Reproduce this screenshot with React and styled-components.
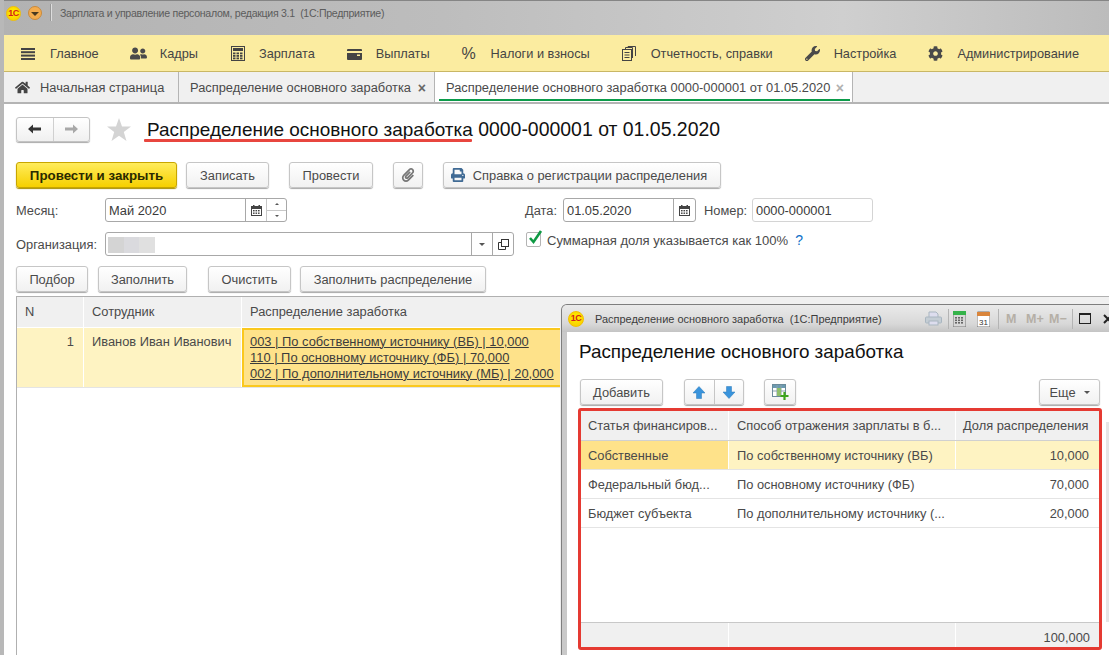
import React from 'react';
import styled, { createGlobalStyle } from 'styled-components';
import { FaWrench, FaCog, FaHome, FaPrint, FaUserFriends, FaPaperclip } from 'react-icons/fa';

const Global = createGlobalStyle`
  html, body { margin: 0; padding: 0; height: 655px; overflow: hidden; background: #fff; }
  #root { height: 655px; }
  * { box-sizing: border-box; }
  body { font-family: "Liberation Sans", Arial, sans-serif; font-size: 12.85px; color: #4a4a4a; }
`;

const Screen = styled.div`
  position: relative; width: 1109px; height: 655px; overflow: hidden;
  display: flex; flex-direction: column;
  background: #fff; border-left: 4px solid #b8b8b8;
`;
const TitleBar = styled.div`
  height: 35px; margin-left: -4px; display: flex; align-items: center; padding: 0 0 10px 6px;
  border-top: 1px solid #858585;
  background: linear-gradient(90deg, #b2b2b2 0, #bdbdbd 40%, #cfcfcf 76%, #bcbcbc 100%);
`;
const Logo = styled.span`
  width: ${p => p.$s || 15}px; height: ${p => p.$s || 15}px; border-radius: 50%; flex: none;
  background: radial-gradient(circle at 50% 40%, #fff200, #f7c600);
  border: 1px solid #f3c000;
  display: flex; align-items: center; justify-content: center;
  color: #d6201a; font: bold 9px/1 "Liberation Sans", sans-serif; letter-spacing: -0.6px;
`;
const RoundBtn = styled.span`
  width: 14px; height: 14px; margin-left: 7px; border-radius: 50%; flex: none;
  background: #f4ac4e; border: 1px solid #c98a3c;
  display: flex; align-items: center; justify-content: center;
  &::after { content: ""; border: 4px solid transparent; border-top: 4px solid #4a3a20; border-bottom: 0; margin-top: 2px; }
`;
const TitleSep = styled.span`
  width: 1px; height: 17px; margin: -2px 9px 0 8px; background: #999; box-shadow: 1px 0 0 #ddd;
`;
const TitleText = styled.span`
  font-size: 10.6px; letter-spacing: -0.3px; color: #5c5c5c; white-space: pre;
`;
const Menu = styled.div`
  height: 37px; display: flex; align-items: center; gap: 31px; padding: 1px 0 0 16px;
  background: #fbeca0; border-bottom: 1px solid #c9b765;
`;
const MenuItem = styled.div`
  display: flex; align-items: center; font-size: 12.75px; color: #444; white-space: nowrap;
`;
const MenuIcon = styled.span`
  width: 30px; flex: none; display: flex; align-items: center; color: #4a4a4a; font-size: 15px;
  padding-left: ${p => p.$pl || 0}px;
`;
const Percent = styled.span`
  font-size: 16px; color: #444;
`;
const Tabs = styled.div`
  height: 32px; display: flex; background: #f0f0f0; border-bottom: 2px solid #b4b4b4;
`;
const Tab = styled.div`
  position: relative; width: ${p => p.$w}px; flex: none; display: flex; align-items: center;
  padding: 1px 0 0 ${p => p.$pl || 11}px; color: #4a4a4a; white-space: nowrap;
  border-right: 1px solid #b4b4b4;
  background: ${p => (p.$active ? '#fff' : 'transparent')};
  ${p => p.$active && `&::after { content: ""; position: absolute; left: 4px; right: 2px; bottom: 1px; height: 2px; background: #0b9b4a; }`}
`;
const HomeIcon = styled.span`
  display: flex; width: 25px; font-size: 15px; color: #444; flex: none;
`;
const TabClose = styled.span`
  margin-left: auto; margin-right: 8px; font-size: 14px; font-weight: bold; line-height: 1;
  color: ${p => (p.$dim ? '#b0b0b0' : '#666')};
`;

const Sheet = styled.div`
  flex: 1; min-height: 0; display: flex; flex-direction: column; padding-left: 12px; background: #fff;
`;
const DocHead = styled.div`
  height: 24px; margin-top: 13px; display: flex; align-items: center;
`;
const NavGroup = styled.div`
  width: 74px; height: 25px; display: flex; flex: none;
  border: 1px solid #c4c4c4; border-radius: 3px; box-shadow: 0 1px 1px #aaa;
  background: linear-gradient(#fff, #f0f0f0);
`;
const NavCell = styled.span`
  flex: 1; display: flex; align-items: center; justify-content: center;
  & + & { border-left: 1px solid #d0d0d0; }
`;
const StarWrap = styled.span`
  display: flex; margin: 0 16px 0 17px;
`;
const DocTitle = styled.h1`
  margin: 0; position: relative; font-size: 19.45px; font-weight: normal; color: #111; white-space: nowrap;
`;
const Underlined = styled.span`
  position: relative; font-size: 18.95px;
  &::after { content: ""; position: absolute; left: -3px; right: 1px; bottom: -2px; height: 2.5px; background: #e8463f; border-radius: 1px; }
`;
const BtnRow = styled.div`
  display: flex; align-items: flex-start; margin-top: ${p => p.$mt}px;
`;
const Btn = styled.button`
  height: 26px; width: ${p => p.$w}px; margin-left: ${p => p.$ml || 0}px; padding: 0 ${p => p.$pr || 0}px 0 0; flex: none;
  display: flex; align-items: center; justify-content: center; gap: 8px;
  border: 1px solid ${p => (p.$primary ? '#c8a600' : '#c6c6c6')}; border-radius: 3px;
  box-shadow: 0 1px 1px ${p => (p.$primary ? '#a89000' : '#a8a8a8')};
  background: ${p => (p.$primary ? 'linear-gradient(#ffec5c, #f6d000)' : 'linear-gradient(#fff, #f1f1f1)')};
  font: ${p => (p.$primary ? 'bold 13.3px' : 'normal 12.85px')} "Liberation Sans", sans-serif;
  color: ${p => (p.$primary ? '#2a2a00' : '#4a4a4a')};
`;
const FieldRow = styled.div`
  display: flex; align-items: flex-start; margin-top: 10px; height: 24px;
`;
const Label = styled.span`
  width: ${p => p.$w}px; flex: none; margin-left: ${p => p.$ml || 0}px; line-height: 26px; color: #4a4a4a; white-space: nowrap;
`;
const Field = styled.div`
  width: ${p => p.$w}px; height: 24px; flex: none; display: flex; background: #fff;
  border: 1px solid ${p => (p.$light ? '#d4d4d4' : '#a8a8a8')}; border-radius: 3px;
`;
const FieldText = styled.span`
  flex: 1; min-width: 0; padding-left: 3px; line-height: 24px; color: #3a3a3a; white-space: nowrap;
`;
const FieldBtn = styled.span`
  width: ${p => p.$w || 21}px; flex: none; display: flex; align-items: center; justify-content: center;
  border-left: 1px solid #a8a8a8; color: #444;
`;
const Spin = styled.span`
  width: 20px; flex: none; display: flex; flex-direction: column; border-left: 1px solid #c8c8c8;
`;
const SpinPart = styled.span`
  flex: 1; display: flex; align-items: center; justify-content: center;
  & + & { border-top: 1px solid #c8c8c8; }
  &::after {
    content: ""; border: 2px solid transparent;
    ${p => (p.$up ? 'border-bottom: 2px solid #555; border-top: 0;' : 'border-top: 2px solid #555; border-bottom: 0;')}
  }
`;
const Caret = styled.span`
  border: 3px solid transparent; border-top: 3.5px solid #555; border-bottom: 0;
`;
const Blur = styled.span`
  display: block; width: 47px; height: 16px; margin: 4px 0 0 -1px;
  background: linear-gradient(90deg, #d4d4d4 0 33%, #dadade 33% 66%, #e0e0e0 66%);
`;
const CheckWrap = styled.div`
  display: flex; margin-left: 12px; height: 15px; align-items: center;
`;
const CheckBox = styled.span`
  position: relative; width: 15px; height: 15px; flex: none; border: 1px solid #b4b4b4; border-radius: 2px; background: #fff;
`;
const CheckMark = styled.svg`
  position: absolute; left: 1px; top: -4px;
`;
const CheckLabel = styled.span`
  margin: 1px 0 0 6px; font-size: 13.05px; color: #4a4a4a; white-space: nowrap;
`;
const Help = styled.span`
  margin: 1px 0 0 7px; font-size: 14px; color: #0f70c8;
`;
const DataTable = styled.div`
  flex: 1; min-height: 0; margin-top: 4px; border-top: 1px solid #b0b0b0; border-left: 1px solid #b0b0b0;
  display: flex; flex-direction: column;
`;
const GridRow = styled.div`
  display: grid; grid-template-columns: ${p => p.$cols}; height: ${p => p.$h}px; flex: none;
  column-gap: 1px;
`;
const HeadCell = styled.div`
  background: #f0f0f0; padding: 0 0 0 ${p => p.$pl ?? 8}px; line-height: ${p => p.$h || 30}px;
  color: #4a4a4a; white-space: nowrap; overflow: hidden;
  ${p => p.$end && 'text-align: right; padding: 0 9px 0 0;'}
`;
const RowLine = styled.div`
  height: 1px; flex: none; background: ${p => p.$c || '#fff'};
`;
const Cell = styled.div`
  background: ${p => p.$bg || '#fff'}; padding: ${p => p.$pt ?? 6}px ${p => (p.$end ? p.$pr || 9 : 0)}px 0 ${p => p.$pl ?? 8}px; line-height: 16px;
  color: #4a4a4a; white-space: nowrap; overflow: hidden; text-align: ${p => (p.$end ? 'right' : 'left')};
`;
const LinkCell = styled.div`
  background: #fee28a; border: 2px solid #fac81e; padding: 4px 0 0 6px; font-size: 12.92px; line-height: 16px; color: #3c3c3c; white-space: nowrap; overflow: hidden;
`;
const LinkLine = styled.div`
  text-decoration: underline; text-decoration-thickness: 1px; text-underline-offset: 1px;
`;

const Popup = styled.div`
  position: absolute; left: 557px; top: 304px; width: 560px; height: 351px;
  border: 1px solid #7e7e7e; border-bottom: 0; border-radius: 6px 6px 0 0;
  background: #c9c9c9; display: flex; flex-direction: column;
  box-shadow: -1px 0 0 #eee;
`;
const PopTitle = styled.div`
  height: 27px; flex: none; display: flex; align-items: center; padding-left: 6px;
  background: linear-gradient(#eaeaea, #d8d8d8 70%, #c4c4c4);
  border-radius: 5px 5px 0 0;
`;
const PopTitleText = styled.span`
  margin-left: 11px; width: 330px; flex: none; font-size: 10.97px; color: #3c3c3c; white-space: pre;
`;
const ToolSlot = styled.span`
  display: flex; flex: none; margin-left: ${p => p.$ml || 0}px;
`;
const ToolSep = styled.span`
  width: 1px; height: 20px; flex: none; background: #b4b4b4; margin-left: ${p => p.$ml || 0}px;
`;
const MemKey = styled.span`
  width: ${p => p.$w}px; flex: none; margin-left: ${p => p.$ml || 0}px;
  font: bold 12.5px "Liberation Sans", sans-serif; color: #b5afa6; white-space: nowrap;
`;
const PopBody = styled.div`
  position: relative; flex: 1; min-height: 0; margin-left: 5px; background: #fff; padding-left: 11px; display: flex; flex-direction: column;
`;
const PopHeading = styled.h2`
  margin: 7px 0 0 1px; height: 26px; font-size: 18.87px; line-height: 26px; font-weight: normal; color: #111; white-space: nowrap;
`;
const PopBar = styled.div`
  display: flex; width: 520px; margin: 14px 0 0 2px; flex: none;
`;
const SplitBtn = styled.div`
  display: flex; width: 60px; height: 26px; margin-left: 21px; flex: none;
  border: 1px solid #c6c6c6; border-radius: 3px; box-shadow: 0 1px 1px #a8a8a8;
  background: linear-gradient(#fff, #f1f1f1);
`;
const SplitPart = styled.span`
  flex: 1; display: flex; align-items: center; justify-content: center;
  & + & { border-left: 1px solid #c6c6c6; }
`;
const Frame = styled.div`
  width: 524px; height: 242px; margin-top: 3px; flex: none; display: flex; flex-direction: column;
  border: 3px solid #e53a32; border-radius: 3px; background: #fff;
`;
const FrameSpacer = styled.div`
  flex: 1; min-height: 0;
`;
const ScrollHint = styled.span`
  position: absolute; left: 539px; top: 90px; width: 3px; height: 200px; background: #e6e6e6;
`;

const Burger = () => (
  <svg width="14" height="14" viewBox="0 0 14 14" fill="#444"><rect y="1" width="14" height="2" /><rect y="4.2" width="14" height="2" /><rect y="7.6" width="14" height="2" /><rect y="11" width="14" height="2" /></svg>
);
const Calc = () => (
  <svg width="14" height="15" viewBox="0 0 14 15"><rect x=".5" y=".5" width="13" height="14" fill="none" stroke="#444" /><rect x="2" y="2" width="10" height="3" fill="#444" />{[6.5, 9, 11.5].map(y => [2, 5.5, 9].map(x => <rect key={x + '-' + y} x={x} y={y} width="2.5" height="1.8" fill="#444" />))}</svg>
);
const Wallet = () => (
  <svg width="15" height="12" viewBox="0 0 15 12"><path d="M1 1h13a1 1 0 0 1 1 1v1H0V2a1 1 0 0 1 1-1z" fill="#444" /><path d="M0 5h15v6a1 1 0 0 1-1 1H1a1 1 0 0 1-1-1z" fill="#444" /><rect x="10" y="6.5" width="3" height="1.5" fill="#fbeca0" /></svg>
);
const Report = () => (
  <svg width="14" height="15" viewBox="0 0 14 15" fill="none" stroke="#444"><rect x=".5" y="3.5" width="9" height="11" fill="#fbeca0" /><path d="M3.5 3V1.5h7V12M6 1V.5h7.5V10M2.5 6.5h5M2.5 9h5M2.5 11.5h5" /></svg>
);
const Star = () => (
  <svg width="24" height="23" viewBox="0 0 24 23"><path d="M12 0l3 8.6h9l-7.2 5.5 2.7 8.9L12 17.7 4.5 23l2.7-8.9L0 8.6h9z" fill="#d4d4d4" /></svg>
);
const ArrowL = ({ c = '#333' }) => (
  <svg width="13" height="10" viewBox="0 0 13 10" fill={c}><path d="M0 5l5-4.5V3.5h8v3H5v3z" /></svg>
);
const ArrowR = ({ c = '#a8a8a8' }) => (
  <svg width="13" height="10" viewBox="0 0 13 10" fill={c}><path d="M13 5L8 .5V3.5H0v3h8v3z" /></svg>
);
const BlueUp = ({ down }) => (
  <svg width="12" height="13" viewBox="0 0 12 13" style={down ? { transform: 'scaleY(-1)' } : undefined}><path d="M6 .5L12 7H8.5v5.5h-5V7H0z" fill="#3a94dc" stroke="#2b78b8" strokeWidth=".5" /></svg>
);
const TableAdd = () => (
  <svg width="17" height="17" viewBox="0 0 17 17"><rect x=".5" y=".5" width="13" height="12" fill="#fff" stroke="#6a8a9a" /><rect x="1" y="1" width="12" height="3" fill="#6a9ab0" /><path d="M5 1v11M9 1v11M1 7h12" stroke="#8aa0ac" /><rect x="5" y="4" width="4" height="8" fill="#8fbf6a" /><path d="M12.5 8v8M8.5 12h8" stroke="#3fa51e" strokeWidth="2.2" /></svg>
);
const CalIcon = () => (
  <svg width="11" height="11" viewBox="0 0 11 11" fill="#444"><path d="M0 1h11v10H0z" /><rect x="1" y="4" width="9" height="6" fill="#fff" /><rect x="2" y="0" width="1.5" height="2" /><rect x="7.5" y="0" width="1.5" height="2" />{[2, 4.5, 7].map(x => [5, 7.5].map(y => <rect key={x + '-' + y} x={x} y={y} width="1.6" height="1.4" />))}</svg>
);
const Copy = () => (
  <svg width="11" height="11" viewBox="0 0 11 11" fill="none" stroke="#333"><rect x="3.5" y=".5" width="7" height="7" /><path d="M3 3.5H.5v7h7V8" /></svg>
);
const PrintDim = () => (
  <svg width="17" height="15" viewBox="0 0 17 15" fill="none" stroke="#a9b6c0"><path d="M4 6V1h7l2 2v3" fill="#dde" /><rect x=".5" y="6" width="16" height="6" rx="1" fill="#c4cdd4" /><rect x="4" y="10" width="9" height="4" fill="#dde" /></svg>
);
const CalcGreen = () => (
  <svg width="13" height="16" viewBox="0 0 13 16"><rect width="13" height="16" fill="#d8d8d8" stroke="#777" /><rect width="13" height="4" fill="#35b34a" />{[6, 8.5, 11].map(y => [2, 5, 8].map(x => <rect key={x + '-' + y} x={x} y={y} width="2" height="1.6" fill="#666" />))}</svg>
);
const Cal31 = () => (
  <svg width="13" height="16" viewBox="0 0 13 16"><rect y="1" width="13" height="15" rx="1" fill="#fff" stroke="#777" /><rect y="1" width="13" height="4" fill="#d9853b" /><text x="6.5" y="13.5" textAnchor="middle" fontSize="8" fontFamily="Liberation Sans" fill="#333">31</text></svg>
);
const Maximize = () => (
  <svg width="12" height="11" viewBox="0 0 12 11" fill="none" stroke="#222"><rect x=".5" y=".5" width="11" height="10" /><path d="M0 1.5h12" /></svg>
);
const CloseX = () => (
  <svg width="10" height="10" viewBox="0 0 10 10" stroke="#222" strokeWidth="2"><path d="M1 1l8 8M9 1l-8 8" /></svg>
);

const menu = [
  ['Главное', <Burger />, 1],
  ['Кадры', <FaUserFriends size={17} />, 0],
  ['Зарплата', <Calc />, 2],
  ['Выплаты', <Wallet />, 1],
  ['Налоги и взносы', <Percent>%</Percent>, 1],
  ['Отчетность, справки', <Report />, 1],
  ['Настройка', <FaWrench size={15} />, 1],
  ['Администрирование', <FaCog size={15} />, 1],
];

const mainCols = '66px 157px 1fr';
const popCols = '147px 226px 1fr';

export default function App() {
  return (
    <Screen>
      <Global />
      <TitleBar>
        <Logo>1С</Logo>
        <RoundBtn />
        <TitleSep />
        <TitleText>Зарплата и управление персоналом, редакция 3.1  (1С:Предприятие)</TitleText>
      </TitleBar>
      <Menu>
        {menu.map(([t, icon, pl]) => (
          <MenuItem key={t}><MenuIcon $pl={pl}>{icon}</MenuIcon>{t}</MenuItem>
        ))}
      </Menu>
      <Tabs>
        <Tab $w={175}><HomeIcon><FaHome /></HomeIcon>Начальная страница</Tab>
        <Tab $w={256}>Распределение основного заработка<TabClose>×</TabClose></Tab>
        <Tab $w={418} $active>Распределение основного заработка 0000-000001 от 01.05.2020<TabClose $dim>×</TabClose></Tab>
      </Tabs>
      <Sheet>
        <DocHead>
          <NavGroup>
            <NavCell><ArrowL /></NavCell>
            <NavCell><ArrowR /></NavCell>
          </NavGroup>
          <StarWrap><Star /></StarWrap>
          <DocTitle><Underlined>Распределение основного заработка</Underlined> 0000-000001 от 01.05.2020</DocTitle>
        </DocHead>
        <BtnRow $mt={21}>
          <Btn $primary $w={161}>Провести и закрыть</Btn>
          <Btn $w={83} $ml={9}>Записать</Btn>
          <Btn $w={84} $ml={20}>Провести</Btn>
          <Btn $w={30} $ml={20}><FaPaperclip size={14} color="#777" /></Btn>
          <Btn $w={278} $ml={20} $pr={6}><FaPrint size={14} color="#3f6a94" />Справка о регистрации распределения</Btn>
        </BtnRow>
        <FieldRow>
          <Label $w={89}>Месяц:</Label>
          <Field $w={182}>
            <FieldText>Май 2020</FieldText>
            <FieldBtn><CalIcon /></FieldBtn>
            <Spin><SpinPart $up /><SpinPart /></Spin>
          </Field>
          <Label $w={38} $ml={238}>Дата:</Label>
          <Field $w={133}>
            <FieldText>01.05.2020</FieldText>
            <FieldBtn $w={22}><CalIcon /></FieldBtn>
          </Field>
          <Label $w={48} $ml={8}>Номер:</Label>
          <Field $w={121} $light><FieldText>0000-000001</FieldText></Field>
        </FieldRow>
        <FieldRow>
          <Label $w={89}>Организация:</Label>
          <Field $w={409}>
            <FieldText><Blur /></FieldText>
            <FieldBtn><Caret /></FieldBtn>
            <FieldBtn><Copy /></FieldBtn>
          </Field>
          <CheckWrap>
            <CheckBox>
              <CheckMark width="15" height="16" viewBox="0 0 15 16"><path d="M2 9l3.5 4L13 2" fill="none" stroke="#0f9a44" strokeWidth="2.6" /></CheckMark>
            </CheckBox>
            <CheckLabel>Суммарная доля указывается как 100%</CheckLabel>
            <Help>?</Help>
          </CheckWrap>
        </FieldRow>
        <BtnRow $mt={10}>
          <Btn $w={72}>Подбор</Btn>
          <Btn $w={89} $ml={10}>Заполнить</Btn>
          <Btn $w={83} $ml={21}>Очистить</Btn>
          <Btn $w={186} $ml={9}>Заполнить распределение</Btn>
        </BtnRow>
        <DataTable>
          <GridRow $cols={mainCols} $h={30}>
            <HeadCell>N</HeadCell>
            <HeadCell>Сотрудник</HeadCell>
            <HeadCell>Распределение заработка</HeadCell>
          </GridRow>
          <RowLine />
          <GridRow $cols={mainCols} $h={59}>
            <Cell $bg="#fef3c2" $end>1</Cell>
            <Cell $bg="#fef3c2">Иванов Иван Иванович</Cell>
            <LinkCell>
              <LinkLine>003 | По собственному источнику (ВБ) | 10,000</LinkLine>
              <LinkLine>110 | По основному источнику (ФБ) | 70,000</LinkLine>
              <LinkLine>002 | По дополнительному источнику (МБ) | 20,000</LinkLine>
            </LinkCell>
          </GridRow>
          <RowLine $c="#e4e4e4" />
        </DataTable>
      </Sheet>
      <Popup>
        <PopTitle>
          <Logo $s={16}>1С</Logo>
          <PopTitleText>Распределение основного заработка  (1С:Предприятие)</PopTitleText>
          <ToolSlot><PrintDim /></ToolSlot>
          <ToolSep $ml={6} />
          <ToolSlot $ml={4}><CalcGreen /></ToolSlot>
          <ToolSlot $ml={11}><Cal31 /></ToolSlot>
          <ToolSep $ml={8} />
          <MemKey $ml={7} $w={10}>M</MemKey>
          <MemKey $ml={10} $w={17}>M+</MemKey>
          <MemKey $ml={6} $w={16}>M−</MemKey>
          <ToolSep $ml={7} />
          <ToolSlot $ml={6}><Maximize /></ToolSlot>
          <ToolSlot $ml={12}><CloseX /></ToolSlot>
        </PopTitle>
        <PopBody>
          <PopHeading>Распределение основного заработка</PopHeading>
          <PopBar>
            <Btn $w={83}>Добавить</Btn>
            <SplitBtn>
              <SplitPart><BlueUp /></SplitPart>
              <SplitPart><BlueUp down /></SplitPart>
            </SplitBtn>
            <Btn $w={32} $ml={20}><TableAdd /></Btn>
            <Btn $w={61} $ml={243}>Еще<Caret /></Btn>
          </PopBar>
          <Frame>
            <GridRow $cols={popCols} $h={29}>
              <HeadCell $h={29} $pl={7}>Статья финансиров...</HeadCell>
              <HeadCell $h={29}>Способ отражения зарплаты в б...</HeadCell>
              <HeadCell $h={29} $pl={7}>Доля распределения</HeadCell>
            </GridRow>
            <RowLine $c="#d0d0d0" />
            <GridRow $cols={popCols} $h={28}>
              <Cell $bg="#fee28a" $pt={7} $pl={7}>Собственные</Cell>
              <Cell $bg="#fef3c2" $pt={7}>По собственному источнику (ВБ)</Cell>
              <Cell $bg="#fef3c2" $pt={7} $end $pr={10}>10,000</Cell>
            </GridRow>
            <RowLine $c="#e4e4e4" />
            <GridRow $cols={popCols} $h={28}>
              <Cell $pt={7} $pl={7}>Федеральный бюд...</Cell>
              <Cell $pt={7}>По основному источнику (ФБ)</Cell>
              <Cell $pt={7} $end $pr={10}>70,000</Cell>
            </GridRow>
            <RowLine $c="#e4e4e4" />
            <GridRow $cols={popCols} $h={28}>
              <Cell $pt={7} $pl={7}>Бюджет субъекта</Cell>
              <Cell $pt={7}>По дополнительному источнику (...</Cell>
              <Cell $pt={7} $end $pr={10}>20,000</Cell>
            </GridRow>
            <RowLine $c="#e4e4e4" />
            <FrameSpacer />
            <RowLine $c="#c8c8c8" />
            <GridRow $cols={popCols} $h={24}>
              <HeadCell $h={24} />
              <HeadCell $h={24} />
              <HeadCell $h={30} $end>100,000</HeadCell>
            </GridRow>
          </Frame>
          <ScrollHint />
        </PopBody>
      </Popup>
    </Screen>
  );
}
